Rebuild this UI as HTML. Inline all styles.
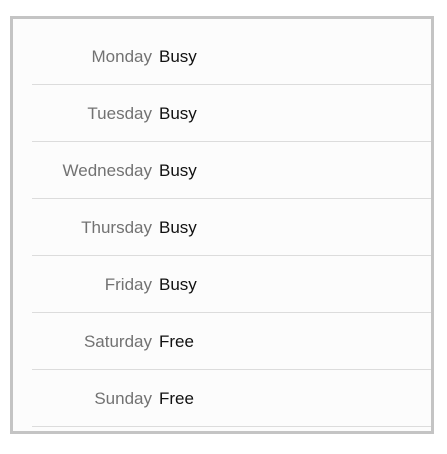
<!DOCTYPE html>
<html><head><style>
body{margin:0;background:#fff;width:447px;height:454px;position:relative;font-family:"Liberation Sans",sans-serif;}
.f{position:absolute;left:10px;top:16px;width:418px;height:412px;border:3px solid #c4c4c4;background:#fcfcfc;overflow:hidden}
.r{position:absolute;left:0;width:418px;height:57px;}
.l{position:absolute;right:279px;top:0;line-height:57px;font-size:17px;color:#727272;white-space:nowrap}
.v{position:absolute;left:146px;top:0;line-height:57px;font-size:17px;color:#111;}
.s{position:absolute;left:19px;right:0;bottom:0;height:1px;background:#dcdcdc}
</style></head><body><div class="f">
<div class="r" style="top:9px"><span class="l">Monday</span><span class="v">Busy</span><div class="s"></div></div>
<div class="r" style="top:66px"><span class="l">Tuesday</span><span class="v">Busy</span><div class="s"></div></div>
<div class="r" style="top:123px"><span class="l">Wednesday</span><span class="v">Busy</span><div class="s"></div></div>
<div class="r" style="top:180px"><span class="l">Thursday</span><span class="v">Busy</span><div class="s"></div></div>
<div class="r" style="top:237px"><span class="l">Friday</span><span class="v">Busy</span><div class="s"></div></div>
<div class="r" style="top:294px"><span class="l">Saturday</span><span class="v">Free</span><div class="s"></div></div>
<div class="r" style="top:351px"><span class="l">Sunday</span><span class="v">Free</span><div class="s"></div></div>
</div></body></html>
